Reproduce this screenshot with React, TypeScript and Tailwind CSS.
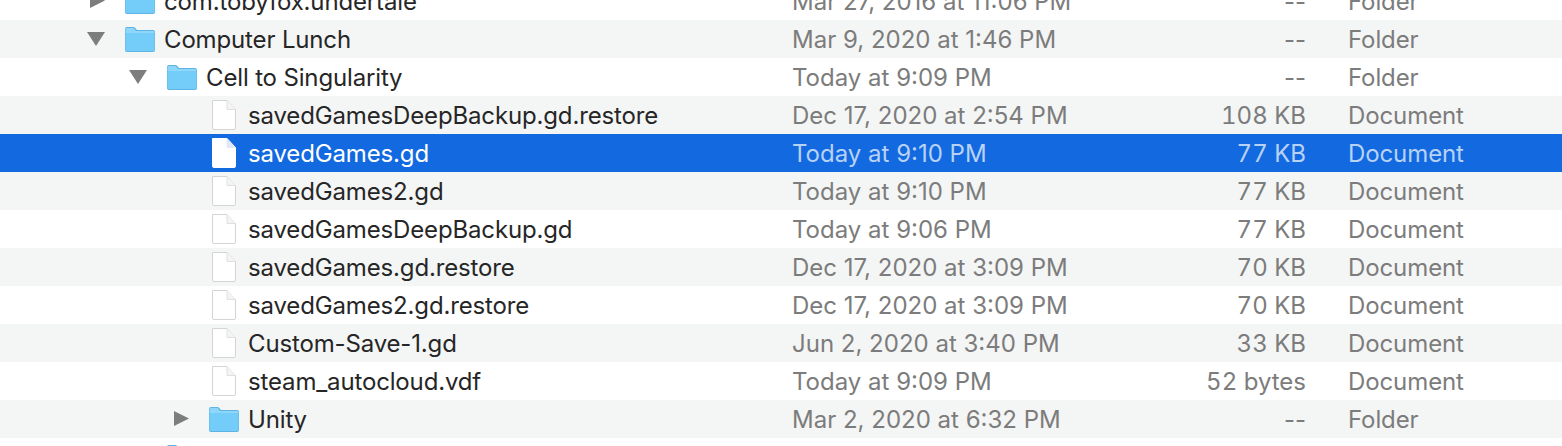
const rows = [
  { name: "com.tobyfox.undertale", date: "Mar 27, 2016 at 11:06 PM", size: "--", kind: "Folder", level: 0, icon: "folder", arrow: "right" },
  { name: "Computer Lunch", date: "Mar 9, 2020 at 1:46 PM", size: "--", kind: "Folder", level: 0, icon: "folder", arrow: "down" },
  { name: "Cell to Singularity", date: "Today at 9:09 PM", size: "--", kind: "Folder", level: 1, icon: "folder", arrow: "down" },
  { name: "savedGamesDeepBackup.gd.restore", date: "Dec 17, 2020 at 2:54 PM", size: "108 KB", kind: "Document", level: 2, icon: "file" },
  { name: "savedGames.gd", date: "Today at 9:10 PM", size: "77 KB", kind: "Document", level: 2, icon: "file", selected: true },
  { name: "savedGames2.gd", date: "Today at 9:10 PM", size: "77 KB", kind: "Document", level: 2, icon: "file" },
  { name: "savedGamesDeepBackup.gd", date: "Today at 9:06 PM", size: "77 KB", kind: "Document", level: 2, icon: "file" },
  { name: "savedGames.gd.restore", date: "Dec 17, 2020 at 3:09 PM", size: "70 KB", kind: "Document", level: 2, icon: "file" },
  { name: "savedGames2.gd.restore", date: "Dec 17, 2020 at 3:09 PM", size: "70 KB", kind: "Document", level: 2, icon: "file" },
  { name: "Custom-Save-1.gd", date: "Jun 2, 2020 at 3:40 PM", size: "33 KB", kind: "Document", level: 2, icon: "file" },
  { name: "steam_autocloud.vdf", date: "Today at 9:09 PM", size: "52 bytes", kind: "Document", level: 2, icon: "file" },
  { name: "Unity", date: "Mar 2, 2020 at 6:32 PM", size: "--", kind: "Folder", level: 2, icon: "folder", arrow: "right" },
  { name: "", date: "", size: "", kind: "", level: 1, icon: "folder", arrow: "right" },
];

function Arrow({ dir }: { dir?: string }) {
  if (!dir) return <span className="w-[38px] shrink-0" />;
  return (
    <span className="w-[38px] shrink-0">
      <svg width="20" height="18" viewBox="0 0 20 18">
        {dir === "down" ? <path d="M0 2h18L9 16z" fill="#7d7d7d" /> : <path d="M3 1l15 7.5L3 16z" fill="#7d7d7d" />}
      </svg>
    </span>
  );
}

function Folder() {
  return (
    <svg width="30" height="25" viewBox="0 0 30 25" className="shrink-0">
      <path d="M0 2a2 2 0 0 1 2-2h6.500a2 2 0 0 1 1.500.7L12 3h16a2 2 0 0 1 2 2v18a2 2 0 0 1-2 2H2a2 2 0 0 1-2-2z" fill="#5db4e4" />
      <path d="M.5 2.500a1.500 1.500 0 0 1 1.500-1.500h6.500l2.500 3H28a1.500 1.500 0 0 1 1.500 1.500V6H.5z" fill="#8fd6fb" />
      <path d="M.5 7a1 1 0 0 1 1-1h27a1 1 0 0 1 1 1v15.500a1.500 1.500 0 0 1-1.500 1.500H2a1.500 1.500 0 0 1-1.500-1.500z" fill="#74cdf9" />
    </svg>
  );
}

function FileIcon({ selected }: { selected?: boolean }) {
  return (
    <svg width="24" height="30" viewBox="0 0 24 30" className="shrink-0">
      <path
        d="M.5.500H15L23.500 9.500V28a1.500 1.500 0 0 1-1.500 1.500H2A1.500 1.500 0 0 1 .5 28z"
        fill="#ffffff"
        stroke={selected ? "#ffffff" : "#d4d4d4"}
      />
      {!selected && <path d="M15 .5V9.500H23.500" fill="#f4f4f4" stroke="#e0e0e0" />}
      {selected && <path d="M15 .5V9.500H23.500" fill="#dfe9f8" stroke="#dfe9f8" />}
    </svg>
  );
}

export default function App() {
  return (
    <div className="h-[446px] w-[1562px] overflow-hidden bg-white font-['Inter','Liberation_Sans',sans-serif] text-[24px]">
      <div className="-mt-[18px] flex flex-col">
        {rows.map((row, i) => (
          <div
            key={i}
            className={`flex h-[38px] shrink-0 items-center ${
              row.selected ? "bg-[#1269e0]" : i % 2 === 0 ? "bg-white" : "bg-[#f4f5f5]"
            }`}
          >
            <div
              className={`flex w-[792px] shrink-0 items-center ${
                row.level === 0 ? "pl-[87px]" : row.level === 1 ? "pl-[129px]" : "pl-[171px]"
              }`}
            >
              <Arrow dir={row.arrow} />
              <span className="flex w-[30px] shrink-0 justify-center">
                {row.icon === "folder" ? <Folder /> : <FileIcon selected={row.selected} />}
              </span>
              <span
                className={`ml-[9px] whitespace-nowrap pt-px tracking-[-0.15px] ${
                  row.selected ? "text-white" : "text-[#262626]"
                }`}
              >
                {row.name}
              </span>
            </div>
            <div className={`w-[380px] shrink-0 whitespace-nowrap pt-px ${row.selected ? "text-[#b8d2f6]" : "text-[#7c7c7c]"}`}>
              {row.date}
            </div>
            <div
              className={`w-[134px] shrink-0 pt-px text-right ${row.size === "--" ? "" : "tabular-nums"} ${
                row.selected ? "text-[#b8d2f6]" : "text-[#7c7c7c]"
              }`}
            >
              {row.size}
            </div>
            <div className={`ml-[42px] pt-px tracking-[-0.1px] ${row.selected ? "text-[#b8d2f6]" : "text-[#7c7c7c]"}`}>{row.kind}</div>
          </div>
        ))}
      </div>
    </div>
  );
}
